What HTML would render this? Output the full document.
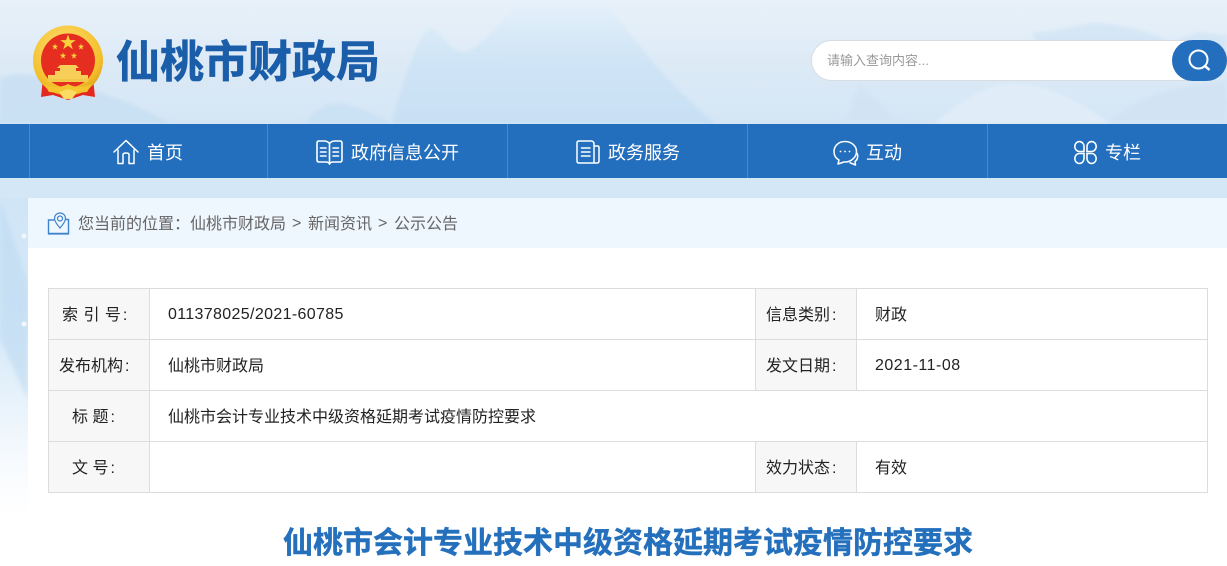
<!DOCTYPE html>
<html lang="zh-CN">
<head>
<meta charset="utf-8">
<title>仙桃市会计专业技术中级资格延期考试疫情防控要求</title>
<style>
html,body{margin:0;padding:0;background:#fff}
body{width:1227px;height:566px;position:relative;overflow:hidden;font-family:"Liberation Sans","Noto Sans CJK SC",sans-serif;color:#333}
.a{position:absolute;white-space:nowrap}
.nav{left:0;top:124px;width:1227px;height:54px;background:#246fbd}
.div{position:absolute;top:0;width:1px;height:54px;background:#4a88c9}
.nt{position:absolute;top:2px;line-height:54px;font-size:18px;color:#fff;white-space:nowrap}
.nav svg{position:absolute}
.bc{left:28px;top:198px;width:1199px;height:50px;background:#eef6fe}
.bt{position:absolute;top:200px;line-height:50px;font-size:16px;color:#666;white-space:nowrap}
.cell{position:absolute;font-size:16px;line-height:50px;height:50px;color:#222;white-space:nowrap}
.cell i{font-style:normal;margin-left:2px}
.lab{position:absolute;background:#f7f7f7;height:50px}
.h{position:absolute;height:1px;background:#dcdcdc;left:48px;width:1160px}
.v{position:absolute;width:1px;background:#dcdcdc}
</style>
</head>
<body>
<svg class="a" style="left:0;top:0" width="1227" height="566" viewBox="0 0 1227 566">
<defs>
<linearGradient id="bg" x1="0" y1="0" x2="0" y2="1"><stop offset="0" stop-color="#e8f1f9"/><stop offset=".6" stop-color="#dbe9f6"/><stop offset="1" stop-color="#d4e6f5"/></linearGradient>
<linearGradient id="lf" x1="0" y1="0" x2="0" y2="1"><stop offset="0" stop-color="#cfe4f6"/><stop offset=".45" stop-color="#d6e9f8"/><stop offset=".85" stop-color="#f8fbfe"/><stop offset="1" stop-color="#fff"/></linearGradient>
<linearGradient id="mt" x1="0" y1="0" x2="0" y2="1"><stop offset="0" stop-color="#e6f1fa"/><stop offset=".45" stop-color="#d0e5f6"/><stop offset="1" stop-color="#c8e0f4"/></linearGradient>
<radialGradient id="gold" cx=".45" cy=".35" r=".75"><stop offset="0" stop-color="#ffe27a"/><stop offset=".7" stop-color="#f3c02c"/><stop offset="1" stop-color="#d5920f"/></radialGradient>
<filter id="b1"><feGaussianBlur stdDeviation="1.500"/></filter>
<filter id="b2"><feGaussianBlur stdDeviation="2"/></filter>
</defs>
<rect width="1227" height="125" fill="url(#bg)"/>
<rect y="178" width="28" height="340" fill="url(#lf)"/>
<rect y="178" width="1227" height="20" fill="#d3e7f6"/>
<path d="M0 200C8 225 20 255 28 285V400L0 340Z" fill="#bcd9f1" opacity=".55" filter="url(#b2)"/>
<circle cx="24" cy="236" r="2.500" fill="#f2f8fd"/><circle cx="24" cy="324" r="2.500" fill="#f2f8fd"/>
<path d="M0 124V78C15 72 35 74 55 80C90 88 130 100 172 124Z" fill="#c6dff3" opacity=".7" filter="url(#b1)"/>
<path d="M305 124C316 108 330 101 345 104C362 108 378 116 392 124Z" fill="#c7e0f4" opacity=".7" filter="url(#b1)"/>
<path d="M392 124C400 90 418 35 429 28C438 26 447 50 463 53C482 50 505 15 521 0H606C630 40 680 95 716 124Z" fill="url(#mt)" filter="url(#b1)"/>
<path d="M1033 33C1060 32 1085 22 1100 23C1125 26 1150 32 1172 42L1200 32L1227 36V60H1040Z" fill="#cde2f4" opacity=".6" filter="url(#b1)"/>
<path d="M845 124L859 80L900 124Z" fill="#cfe3f4" opacity=".5" filter="url(#b1)"/>
<path d="M935 124C955 105 975 92 1000 84C1040 80 1080 100 1110 124Z" fill="#e0edf8" filter="url(#b1)"/>
<path d="M1110 124C1130 100 1170 84 1227 80V124Z" fill="#d0e3f4" opacity=".7" filter="url(#b1)"/>
<!-- emblem -->
<path d="M43 78L41 97L53 95L68 100L83 95L95 97L93 78Z" fill="#e5281f"/>
<circle cx="68" cy="60.500" r="35" fill="url(#gold)"/>
<circle cx="68" cy="60.500" r="27" fill="#e52e1f"/>
<path d="M68 34.500l1.900 5.600h5.900l-4.800 3.500 1.800 5.700-4.800-3.500-4.800 3.500 1.800-5.700-4.800-3.500h5.900z" fill="#f9d23e"/>
<path d="M55 43.500l.8 2.300h2.400l-2 1.500.8 2.300-2-1.400-2 1.400.8-2.300-2-1.500h2.400zM81 43.500l.8 2.300h2.400l-2 1.500.8 2.300-2-1.400-2 1.400.8-2.300-2-1.500h2.400zM63 52.500l.8 2.300h2.400l-2 1.500.8 2.300-2-1.400-2 1.400.8-2.300-2-1.500h2.400zM74 52.500l.8 2.300h2.400l-2 1.500.8 2.300-2-1.400-2 1.400.8-2.300-2-1.500h2.400z" fill="#f9d23e"/>
<path d="M60 65h16l3 3h-3v3h5v4h7v4H48v-4h7v-4h5v-3h-3z" fill="#f7cf58"/>
<path d="M48 79h40v3H48z" fill="#f3c84a"/>
<path d="M44 84C52 88 60 88 68 84C76 88 84 88 92 84L87 92L76 93L68 90L60 93L49 92Z" fill="#f4c52f"/>
<path d="M59 92L68 89L77 92L72 99H64Z" fill="#fbdc62"/>
</svg>

<div class="a" style="left:116px;top:30px;font-size:44px;line-height:66px;font-weight:700;color:#1a5da9;-webkit-text-stroke:.6px #1a5da9">仙桃市财政局</div>

<div class="a" style="left:811px;top:40px;width:416px;height:41px;box-sizing:border-box;background:#fff;border:1px solid #d8dde2;border-radius:21px"></div>
<div class="a" style="left:827px;top:41px;line-height:40px;font-size:13px;color:#999">请输入查询内容...</div>
<div class="a" style="left:1172px;top:40px;width:55px;height:41px;background:#246fbd;border-radius:21px"></div>
<svg class="a" style="left:1172px;top:40px" width="55" height="41" viewBox="0 0 55 41" fill="none" stroke="#fff"><circle cx="26.500" cy="19.500" r="9" stroke-width="2"/><path d="M33 26L37.500 30" stroke-width="2.500"/></svg>

<div class="a nav">
<div class="div" style="left:29px"></div><div class="div" style="left:267px"></div><div class="div" style="left:507px"></div><div class="div" style="left:747px"></div><div class="div" style="left:987px"></div>
<svg style="left:113px;top:15px" width="26" height="26" viewBox="0 0 26 26" fill="none" stroke="#fff" stroke-width="1.500" stroke-linejoin="round" stroke-linecap="round"><path d="M1 13L13 1.500L25 13M5 11V24.500H10V15.500C10 13.500 16 13.500 16 15.500V24.500H21V11"/></svg>
<div class="nt" style="left:147px">首页</div>
<svg style="left:316px;top:16px" width="27" height="25" viewBox="0 0 27 25" fill="none" stroke="#fff" stroke-width="1.600" stroke-linecap="round"><path d="M13.500 3.500C12 1.500 10 1 8 1H3C1.800 1 1 1.800 1 3V20C1 21.500 1.800 22 3 22H10C12 22 13 23 13.500 24C14 23 15 22 17 22H24C25.200 22 26 21.500 26 20V3C26 1.800 25.200 1 24 1H19C17 1 15 1.500 13.500 3.500ZM13.500 3.500V24M4.500 8H10M4.500 12H10M4.500 16H10M17 8H22.500M17 12H22.500M17 16H22.500"/></svg>
<div class="nt" style="left:351px">政府信息公开</div>
<svg style="left:576px;top:16px" width="24" height="24" viewBox="0 0 24 24" fill="none" stroke="#fff" stroke-width="1.500" stroke-linecap="round"><path d="M3 1H15C17 1 18 2 18 4V23H3C1.800 23 1 22.200 1 21V3C1 1.800 1.800 1 3 1ZM18 6H21.500C22.500 6 23 6.500 23 7.500V21C23 22.200 22.200 23 21 23H17M5.500 8H14M5.500 12H14M5.500 16H14"/></svg>
<div class="nt" style="left:608px">政务服务</div>
<svg style="left:833px;top:16px" width="26" height="26" viewBox="0 0 26 26" fill="none" stroke="#fff" stroke-width="1.500" stroke-linejoin="round"><path d="M12 1.500C5.500 1.500 1 6 1 11.500C1 15.500 3 18.500 6 20L5 24L11 22C17 22.500 23.500 18 23.500 11.500C23.500 6 18.500 1.500 12 1.500Z"/><path d="M24 13C25.500 16 24.500 20 22 21.500L22.500 25L16.500 22.500"/><circle cx="7.500" cy="11.500" r=".9" fill="#fff" stroke="none"/><circle cx="12" cy="11.500" r=".9" fill="#fff" stroke="none"/><circle cx="16.500" cy="11.500" r=".9" fill="#fff" stroke="none"/></svg>
<div class="nt" style="left:866px">互动</div>
<svg style="left:1073px;top:16px" width="25" height="25" viewBox="0 0 25 25" fill="none" stroke="#fff" stroke-width="1.600"><path d="M11 11.500H6A4.600 5 0 1 1 11 6.500ZM14 11.500H19A4.600 5 0 1 0 14 6.500ZM11 13.500H6A4.600 5 0 1 0 11 18.500ZM14 13.500H19A4.600 5 0 1 1 14 18.500Z"/></svg>
<div class="nt" style="left:1105px">专栏</div>
</div>

<div class="a" style="left:28px;top:248px;width:1199px;height:318px;background:#fff"></div>
<div class="a bc"></div>
<svg class="a" style="left:47px;top:212px" width="23" height="23" viewBox="0 0 23 23" fill="none" stroke="#3f83ca" stroke-width="1.200"><path d="M7 8H1.500V21.500H21.500V7.500H18" stroke-width="1.400"/><path d="M1 21.800H22" stroke-width="1.600"/><path d="M13 1C9.700 1 7.500 3.500 7.500 6.500C7.500 10 11 13.500 13 16C15 13.500 18.500 10 18.500 6.500C18.500 3.500 16.300 1 13 1Z" fill="#eef6fe"/><circle cx="13" cy="6.500" r="2.500"/></svg>
<div class="bt" style="left:78px">您当前的位置：</div>
<div class="bt" style="left:190px">仙桃市财政局</div>
<div class="bt" style="left:292px;top:199px">&gt;</div>
<div class="bt" style="left:308px">新闻资讯</div>
<div class="bt" style="left:378px;top:199px">&gt;</div>
<div class="bt" style="left:394px">公示公告</div>

<div class="lab" style="left:49px;top:289px;width:100px;height:203px"></div>
<div class="lab" style="left:756px;top:289px;width:100px"></div>
<div class="lab" style="left:756px;top:340px;width:100px"></div>
<div class="lab" style="left:756px;top:442px;width:100px"></div>

<div class="h" style="top:288px"></div><div class="h" style="top:339px"></div><div class="h" style="top:390px"></div><div class="h" style="top:441px"></div><div class="h" style="top:492px"></div>
<div class="v" style="left:48px;top:288px;height:205px"></div>
<div class="v" style="left:149px;top:288px;height:205px"></div>
<div class="v" style="left:755px;top:288px;height:102px"></div>
<div class="v" style="left:856px;top:288px;height:102px"></div>
<div class="v" style="left:755px;top:441px;height:52px"></div>
<div class="v" style="left:856px;top:441px;height:52px"></div>
<div class="v" style="left:1207px;top:288px;height:205px"></div>

<div class="cell" style="left:62px;top:291px;word-spacing:1px">索 引 号<i>:</i></div>
<div class="cell" style="left:168px;top:290px;letter-spacing:.35px">011378025/2021-60785</div>
<div class="cell" style="left:766px;top:291px">信息类别<i>:</i></div>
<div class="cell" style="left:875px;top:291px">财政</div>
<div class="cell" style="left:59px;top:342px">发布机构<i>:</i></div>
<div class="cell" style="left:168px;top:342px">仙桃市财政局</div>
<div class="cell" style="left:766px;top:342px">发文日期<i>:</i></div>
<div class="cell" style="left:875px;top:341px;letter-spacing:.5px">2021-11-08</div>
<div class="cell" style="left:72px;top:393px">标 题<i>:</i></div>
<div class="cell" style="left:168px;top:393px">仙桃市会计专业技术中级资格延期考试疫情防控要求</div>
<div class="cell" style="left:72px;top:444px">文 号<i>:</i></div>
<div class="cell" style="left:766px;top:444px">效力状态<i>:</i></div>
<div class="cell" style="left:875px;top:444px">有效</div>

<div class="a" style="left:283px;top:522px;font-size:30px;line-height:44px;font-weight:700;color:#2470bd;-webkit-text-stroke:.4px #2470bd">仙桃市会计专业技术中级资格延期考试疫情防控要求</div>
</body>
</html>
